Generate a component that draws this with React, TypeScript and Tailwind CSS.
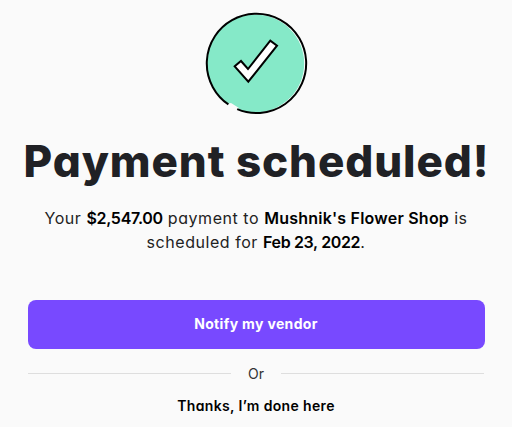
function CheckBadge() {
	return (
		<svg
			className="h-[104px] w-[104px] shrink-0"
			viewBox="0 0 104 104"
			fill="none"
			aria-hidden="true"
		>
			<circle cx="52.3" cy="51.3" r="49.7" fill="#fff" />
			<circle cx="51.3" cy="51.5" r="48.9" fill="#85e9c8" />
			<path d="M22 92 L25 99 L34 102 L35 96 L27 91 Z" fill="#fafafa" />
			<path
				d="M33.2 97.2 A49.7 49.7 0 1 0 24.4 92.4"
				stroke="#000"
				strokeWidth="2"
			/>
			<path
				d="M30.7 54.3 L37 49 L44 57 L66.3 28.7 L73 33.7 L44.3 69.7 Z"
				fill="#fff"
				stroke="#000"
				strokeWidth="2"
			/>
		</svg>
	);
}

export default function App() {
	return (
		<main className="flex h-[427px] w-[512px] flex-col items-center overflow-hidden bg-[#fafafa] pt-3 font-['Inter',sans-serif] text-black [font-feature-settings:'cv11']">
			<CheckBadge />
			<h1 className="mt-[17px] pl-px text-[44px] leading-[56px] font-extrabold tracking-[0.9px] whitespace-nowrap text-[#202125]">
				Payment scheduled!
			</h1>
			<p className="mt-[17px] flex flex-col items-center text-[16px] leading-[25px] tracking-[0.55px] whitespace-nowrap text-[#222]">
				<span>
					Your{" "}
					<b className="font-semibold tracking-[-0.3px] text-black">
						$2,547.00
					</b>{" "}
					payment to{" "}
					<b className="font-semibold tracking-[0.22px] text-black">
						Mushnik's Flower Shop
					</b>{" "}
					is
				</span>
				<span className="-mt-px">
					scheduled for{" "}
					<b className="font-semibold tracking-[-0.35px] text-black">
						Feb 23, 2022
					</b>
					.
				</span>
			</p>
			<div className="mt-[45px] flex w-[457px] flex-col items-center">
				<button
					type="button"
					className="h-[49px] w-full rounded-lg bg-[#7849ff] pb-0.5 text-[14px] font-bold tracking-[0.35px] text-white"
				>
					Notify my vendor
				</button>
				<div className="mt-[14px] flex h-5 w-full items-center justify-between text-[14px] text-[#333]">
					<span className="h-px w-[203px] bg-[#dedede]" />
					<span>Or</span>
					<span className="h-px w-[203px] bg-[#dedede]" />
				</div>
				<button
					type="button"
					className="mt-[13px] text-[14px] leading-5 font-semibold tracking-[0.35px] whitespace-nowrap"
				>
					Thanks, I’m done here
				</button>
			</div>
		</main>
	);
}
